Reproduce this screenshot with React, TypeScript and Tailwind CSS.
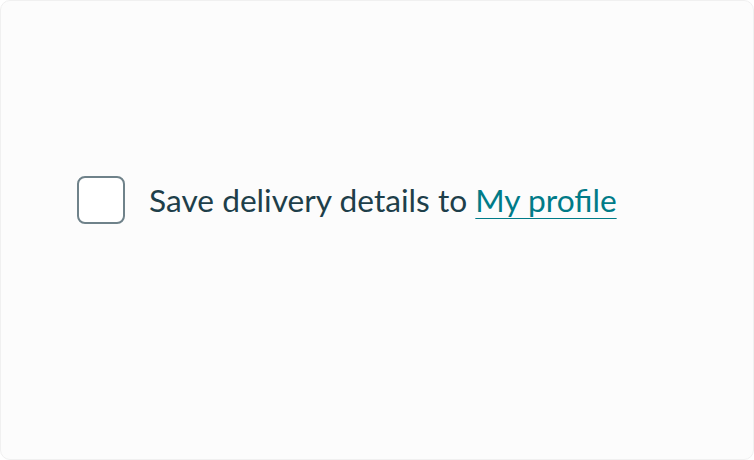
export default function App() {
  return (
    <div className="w-[754px] h-[460px] bg-white">
      <div className="w-full h-full rounded-[10px] border border-[#f0f0f0] bg-[#fcfcfc] flex items-center pl-[76px] pb-[60px]">
        <label className="flex items-center gap-[24px] font-['Lato',sans-serif] text-[31.7px] leading-none text-[#1e3f4a]">
          <span className="w-[48px] h-[48px] rounded-[8px] border-2 border-[#6f828a] bg-white shrink-0" />
          <span className="pt-[2px]">
            Save delivery details to{' '}
            <a href="#" className="text-[#007b88] underline decoration-1 underline-offset-[6px]">
              My profile
            </a>
          </span>
        </label>
      </div>
    </div>
  );
}
